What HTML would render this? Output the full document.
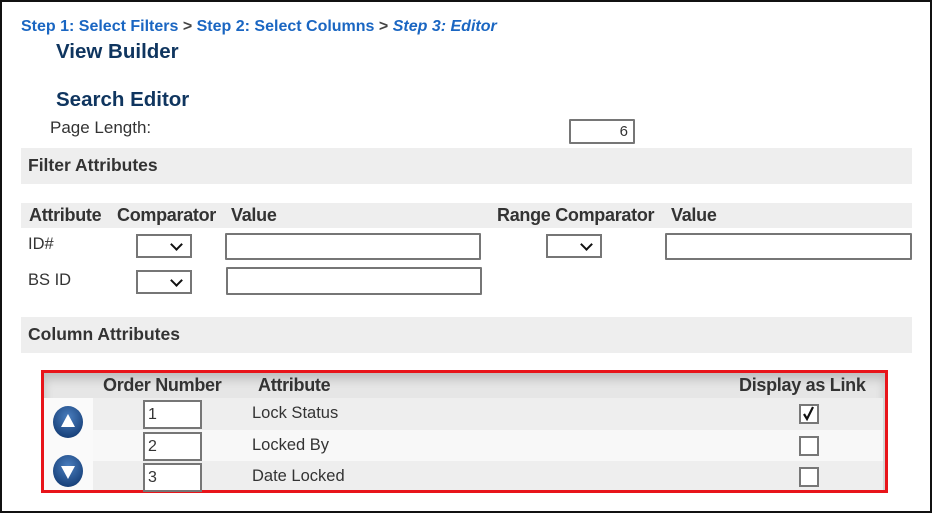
<!DOCTYPE html>
<html><head><meta charset="utf-8"><style>
*{margin:0;padding:0;box-sizing:border-box}
body{width:933px;height:514px;background:#fff;position:relative;overflow:hidden;font-family:"Liberation Sans",Arial,sans-serif;color:#333}
.frame{position:absolute;left:0;top:0;width:932px;height:513px;border:2px solid #111}
.a{position:absolute;white-space:nowrap}
.bc{left:21px;top:18px;font-size:16px;font-weight:bold;color:#1a66c2}
.bc span{color:#444}
.h{font-size:20.5px;font-weight:bold;color:#0f355f;left:56px}
.bar{position:absolute;left:21px;width:891px;background:#eeeeee}
.bt{font-size:17.5px;font-weight:bold;color:#333}
.hd{font-size:18px;font-weight:bold;color:#333;letter-spacing:-0.3px}
.inp{position:absolute;border:2px solid #767676;border-radius:1px;background:#fff}
.sel{position:absolute;border:2px solid #767676;background:#fff}
.sel:after{content:"";position:absolute;right:9px;top:4px;width:7px;height:7px;border-right:2px solid #111;border-bottom:2px solid #111;transform:rotate(45deg)}
.cell{font-size:16.5px;color:#333}
.row{position:absolute;left:93px;width:790px}
.num{position:absolute;left:143px;width:59px;height:29px;border:2px solid #767676;background:#fff;font-size:16px;padding:4px 0 0 3px;color:#333}
.cb{position:absolute;left:799px;width:20px;height:20px;border:2px solid #777;background:#fff}
</style></head><body>
<div class="frame"></div>
<div class="a bc">Step 1: Select Filters <span>&gt;</span> Step 2: Select Columns <span>&gt;</span> <i>Step 3: Editor</i></div>
<div class="a h" style="top:40px">View Builder</div>
<div class="a h" style="top:88px">Search Editor</div>
<div class="a" style="left:50px;top:118px;font-size:17px;color:#333">Page Length:</div>
<div class="inp" style="left:569px;top:119px;width:66px;height:25px;text-align:right;font-size:15px;padding:2px 5px 0 0">6</div>

<div class="bar" style="top:148px;height:36px"></div>
<div class="a bt" style="left:28px;top:155px">Filter Attributes</div>

<div class="bar" style="top:203px;height:25px"></div>
<div class="a hd" style="left:29px;top:205px">Attribute</div>
<div class="a hd" style="left:117px;top:205px">Comparator</div>
<div class="a hd" style="left:231px;top:205px">Value</div>
<div class="a hd" style="left:497px;top:205px">Range Comparator</div>
<div class="a hd" style="left:671px;top:205px">Value</div>

<div class="a cell" style="left:28px;top:235px">ID#</div>
<div class="sel" style="left:136px;top:234px;width:56px;height:24px"></div>
<div class="inp" style="left:225px;top:233px;width:256px;height:27px"></div>
<div class="sel" style="left:546px;top:234px;width:56px;height:24px"></div>
<div class="inp" style="left:665px;top:233px;width:247px;height:27px"></div>

<div class="a cell" style="left:28px;top:271px">BS ID</div>
<div class="sel" style="left:136px;top:270px;width:56px;height:24px"></div>
<div class="inp" style="left:226px;top:267px;width:256px;height:28px"></div>

<div class="bar" style="top:317px;height:36px"></div>
<div class="a bt" style="left:28px;top:324px">Column Attributes</div>

<div style="position:absolute;left:41px;top:370px;width:847px;height:123px;border:3px solid #e8141a;background:#e6e6e6;box-shadow:inset 0 6px 10px rgba(0,0,0,0.18)"></div>
<div style="position:absolute;left:44px;top:398px;width:50px;height:92px;background:#fafafa"></div>
<div class="row" style="top:398px;height:32px;background:#eeeeee"></div>
<div class="row" style="top:430px;height:31px;background:#f8f8f8"></div>
<div class="row" style="top:461px;height:29px;background:#eeeeee"></div>
<div class="a hd" style="left:103px;top:375px">Order Number</div>
<div class="a hd" style="left:258px;top:375px">Attribute</div>
<div class="a hd" style="left:739px;top:375px">Display as Link</div>

<svg style="position:absolute;left:52px;top:405px" width="32" height="34" viewBox="0 0 32 34">
<defs><radialGradient id="g" cx="50%" cy="35%" r="65%"><stop offset="0" stop-color="#4b7fbf"/><stop offset="1" stop-color="#163f78"/></radialGradient></defs>
<ellipse cx="16" cy="17" rx="15" ry="16" fill="url(#g)"/><polygon points="16,9 23,22 9,22" fill="#fff"/></svg>
<svg style="position:absolute;left:52px;top:454px" width="32" height="34" viewBox="0 0 32 34">
<ellipse cx="16" cy="17" rx="15" ry="16" fill="url(#g)"/><polygon points="9,12 23,12 16,25" fill="#fff"/></svg>

<div class="num" style="top:400px">1</div>
<div class="num" style="top:432px">2</div>
<div class="num" style="top:463px">3</div>
<div class="a cell" style="left:252px;top:404px">Lock Status</div>
<div class="a cell" style="left:252px;top:436px">Locked By</div>
<div class="a cell" style="left:252px;top:467px">Date Locked</div>
<div class="cb" style="top:404px"><svg width="16" height="16" viewBox="0 0 16 16" style="position:absolute;left:0;top:0"><path d="M3 8 L6 13 L12 1" stroke="#111" stroke-width="2.2" fill="none"/></svg></div>
<div class="cb" style="top:436px"></div>
<div class="cb" style="top:467px"></div>
</body></html>
